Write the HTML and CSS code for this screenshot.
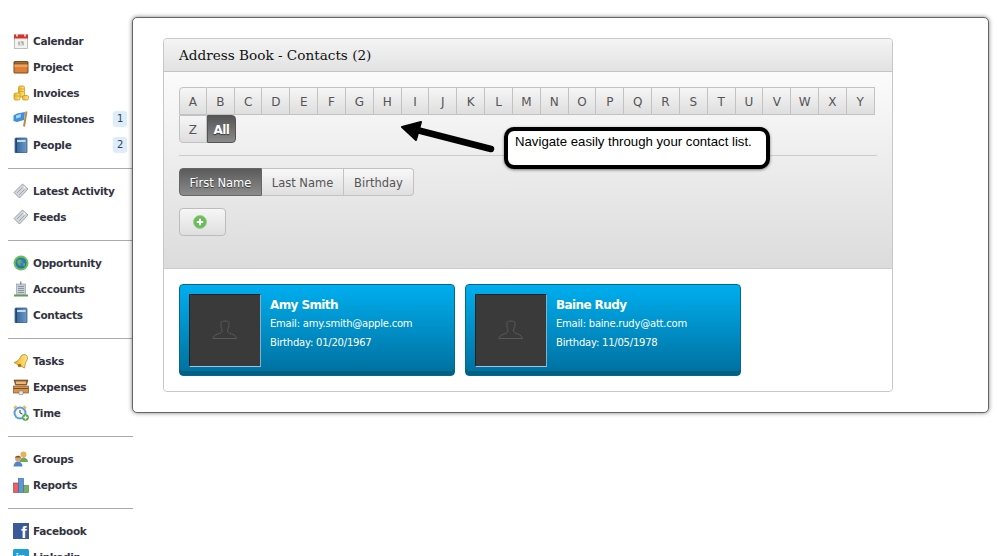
FILE: index.html
```html
<!DOCTYPE html>
<html>
    <head>
        <meta charset="utf-8">
        <title>Address Book - Contacts</title>
        <link rel="stylesheet" href="styles.css">
    </head>
    <body>
        <svg class="sprite" xmlns="http://www.w3.org/2000/svg">
            <defs>
                <linearGradient id="bookfill" x1="0" x2="1" y1="0" y2="0"><stop offset="0" stop-color="#2f5f96"/><stop offset="1" stop-color="#6d9cc9"/></linearGradient>
                <linearGradient id="goldfill" x1="0" x2="1" y1="0" y2="0"><stop offset="0" stop-color="#f0b720"/><stop offset="1" stop-color="#ffe488"/></linearGradient>
                <radialGradient id="globefill" cx=".45" cy=".45" r=".6"><stop offset="0" stop-color="#3f8fd0"/><stop offset="1" stop-color="#1d6ea0"/></radialGradient>
            </defs>
            <symbol id="book" viewBox="0 0 16 16">
                <rect x="2" y="1" width="12" height="15" rx="1" fill="url(#bookfill)" stroke="#2a4d78" stroke-width=".7"/>
                <rect x="4" y="3" width="8.5" height="2" fill="#c4daee"/>
                <path d="M3.5 1.5v14" stroke="#24466f" stroke-width="1"/>
            </symbol>
            <symbol id="ticket" viewBox="0 0 16 16">
                <path d="M1 9.500 9.500 1l5.500 5L6.500 15z" fill="#d4d6d8" stroke="#8d9194" stroke-width=".8"/>
                <path d="M4 10l5.500-5.500M6 12l5.500-5.500" stroke="#8fa7c0" stroke-width="1"/>
                <path d="M11 4l1 1" stroke="#fff" stroke-width="1.400"/>
            </symbol>
            <symbol id="person" viewBox="0 0 26 22">
                <path d="M9 2.500C9 .5 17 .5 17 2.500c.5 4-1 6-1.500 7.500-.3 2 1 3 4 4 3 1 4.500 2 5 4.500H1C1.500 16 3 15 6 14c3-1 4.300-2 4-4C9.500 8.500 8.500 6.500 9 2.500z" fill="none" stroke="#595959" stroke-width="1"/>
            </symbol>
        </svg>

        <div class="layout">
            <nav class="sidebar">
                <ul class="navgroup">
                    <li>
                        <svg class="ico" viewBox="0 0 16 16"><rect x="1.500" y="2" width="13" height="13.500" fill="#f3f3f0" stroke="#a5a5a0" stroke-width=".7"/><rect x="1" y="1.500" width="14" height="4" fill="#d8332a"/><path d="M4 .5v3M12 .5v3" stroke="#eee" stroke-width="1.600"/><path d="M5 8h6v5H5z" fill="#ddd"/><path d="M6 9v3M8 9h2v3" stroke="#888" stroke-width=".8" fill="none"/></svg>
                        <span>Calendar</span>
                    </li>
                    <li>
                        <svg class="ico" viewBox="0 0 16 16"><rect x=".5" y="2" width="15" height="12.500" rx="1.500" fill="#7a4a20"/><rect x="1.500" y="5.500" width="13" height="8" fill="#dd7f35"/><rect x="1.500" y="5.500" width="13" height="2.500" fill="#eea261"/><rect x="2" y="3" width="12" height="1.600" fill="#a26a35"/></svg>
                        <span>Project</span>
                    </li>
                    <li>
                        <svg class="ico" viewBox="0 0 16 16"><rect x="5.500" y="1" width="6" height="11" rx="1.500" fill="url(#goldfill)" stroke="#c48e12" stroke-width=".7"/><rect x="1" y="8" width="6" height="7" rx="1.500" fill="url(#goldfill)" stroke="#c48e12" stroke-width=".7"/><rect x="9.500" y="10.500" width="6" height="4.500" rx="1.500" fill="url(#goldfill)" stroke="#c48e12" stroke-width=".7"/><path d="M6 4h5M6 6.500h5M1.500 11h5" stroke="#c48e12" stroke-width=".6"/></svg>
                        <span>Invoices</span>
                    </li>
                    <li>
                        <svg class="ico" viewBox="0 0 16 16"><path d="M.5 4.500 4 2.500 12 1l-1 8-7 2-3.500-1z" fill="#3f8fe0"/><path d="M3 4.500l5-1.500L7.500 6.500 3 7.500z" fill="#a8d4f7"/><path d="M13.500 .5 11 15.500" stroke="#b98a4a" stroke-width="2"/></svg>
                        <span>Milestones</span>
                        <em class="badge">1</em>
                    </li>
                    <li>
                        <svg class="ico"><use href="#book"/></svg>
                        <span>People</span>
                        <em class="badge">2</em>
                    </li>
                </ul>
                <ul class="navgroup">
                    <li>
                        <svg class="ico"><use href="#ticket"/></svg>
                        <span>Latest Activity</span>
                    </li>
                    <li>
                        <svg class="ico"><use href="#ticket"/></svg>
                        <span>Feeds</span>
                    </li>
                </ul>
                <ul class="navgroup">
                    <li>
                        <svg class="ico" viewBox="0 0 16 16"><circle cx="8" cy="8" r="7.500" fill="#6fbf5c"/><circle cx="8" cy="8" r="5.500" fill="url(#globefill)"/><path d="M5 4.500l3 .5 1 2-2 1 .5 3-2-1.500L4 7z" fill="#6fae58"/><path d="M10.500 8l2 .5-1 3-1.500-1z" fill="#6fae58"/></svg>
                        <span>Opportunity</span>
                    </li>
                    <li>
                        <svg class="ico" viewBox="0 0 16 16"><rect x="1" y="13.500" width="14" height="2" fill="#5da04a"/><rect x="3.500" y="3" width="9" height="10.500" fill="#c7ced6" stroke="#8a929a" stroke-width=".6"/><rect x="7" y=".5" width="1.500" height="3" fill="#8a929a"/><path d="M5 5.500h6M5 7.500h6M5 9.500h6M5 11.500h6" stroke="#8a96a3" stroke-width="1"/></svg>
                        <span>Accounts</span>
                    </li>
                    <li>
                        <svg class="ico"><use href="#book"/></svg>
                        <span>Contacts</span>
                    </li>
                </ul>
                <ul class="navgroup">
                    <li>
                        <svg class="ico" viewBox="0 0 16 16"><path d="M1 9.500C4 9 6 7 7.500 4c1-2.500 4-3 5.500-2 2 1.500 2 4 .5 6-1.500 2-1.500 5-2 7z" fill="url(#goldfill)" stroke="#b07d12" stroke-width=".7"/><circle cx="6.500" cy="12.500" r="1.800" fill="#a8741a"/></svg>
                        <span>Tasks</span>
                    </li>
                    <li>
                        <svg class="ico" viewBox="0 0 16 16"><path d="M1 1h14l-1.500 5h-11z" fill="#9c6430" stroke="#5e3a18" stroke-width=".6"/><rect x="3" y="2.500" width="10" height="2.500" fill="#e8b878"/><rect x=".5" y="7" width="15" height="7" fill="#d8924a" stroke="#6e4520" stroke-width=".6"/><path d="M.5 9.500h15" stroke="#7a4e24" stroke-width="1"/><rect x="6" y="12" width="4" height="3.500" fill="#e8e8e8" stroke="#777" stroke-width=".5"/></svg>
                        <span>Expenses</span>
                    </li>
                    <li>
                        <svg class="ico" viewBox="0 0 16 16"><circle cx="7" cy="8" r="6.500" fill="#5a9ddb"/><circle cx="7" cy="8" r="4.500" fill="#f1f5f8"/><path d="M7 5v3l2.500 1" stroke="#445" stroke-width="1" fill="none"/><path d="M1 3.500 3.500 1M13 3.500 10.500 1" stroke="#e8b840" stroke-width="2"/><circle cx="12.500" cy="12.500" r="3.300" fill="#47a53c"/><path d="M12.500 10.500v4M10.500 12.500h4" stroke="#fff" stroke-width="1.300"/></svg>
                        <span>Time</span>
                    </li>
                </ul>
                <ul class="navgroup">
                    <li>
                        <svg class="ico" viewBox="0 0 16 16"><circle cx="10.500" cy="3.500" r="3" fill="#e9b05c"/><path d="M6.500 11c0-3 2-4.500 4-4.500s4.500 1.500 4.500 4.500z" fill="#6fa956"/><circle cx="5" cy="7.500" r="3" fill="#d9a273"/><path d="M2 6.500c1-2 5-2 6 0z" fill="#7a4a26"/><path d="M.5 15.500c0-3 2-5 4.500-5s4.500 2 4.500 5z" fill="#4f86c9"/></svg>
                        <span>Groups</span>
                    </li>
                    <li>
                        <svg class="ico" viewBox="0 0 16 16"><rect x=".5" y="6" width="5" height="9.500" fill="#e86060" stroke="#b52f2f" stroke-width=".6"/><rect x="5.500" y="1.500" width="5" height="14" fill="#5e95d8" stroke="#2f62a5" stroke-width=".6"/><rect x="10.500" y="8.500" width="5" height="7" fill="#74b06a" stroke="#3e7d36" stroke-width=".6"/></svg>
                        <span>Reports</span>
                    </li>
                </ul>
                <ul class="navgroup">
                    <li>
                        <svg class="ico" viewBox="0 0 16 16"><rect width="16" height="16" fill="#3b5998"/><text x="8" y="15" class="brand">f</text></svg>
                        <span>Facebook</span>
                    </li>
                    <li>
                        <svg class="ico" viewBox="0 0 16 16"><rect width="16" height="16" rx="1.500" fill="#1f9fd6"/><text x="2.500" y="13" class="brand small">in</text></svg>
                        <span>Linkedin</span>
                    </li>
                </ul>
            </nav>

            <div class="main">
                <div class="panel">
                    <h1 class="panelhead">Address Book - Contacts (2)</h1>
                    <div class="filters">
                        <div class="alpha">
                            <a>A</a><a>B</a><a>C</a><a>D</a><a>E</a><a>F</a><a>G</a><a>H</a><a>I</a><a>J</a><a>K</a><a>L</a><a>M</a><a>N</a><a>O</a><a>P</a><a>Q</a><a>R</a><a>S</a><a>T</a><a>U</a><a>V</a><a>W</a><a>X</a><a>Y</a><a>Z</a><a class="on">All</a>
                        </div>
                        <div class="rule"></div>
                        <div class="tabs">
                            <a class="on">First Name</a><a>Last Name</a><a>Birthday</a>
                        </div>
                        <a class="addbtn">
                            <svg viewBox="0 0 14 14" width="14" height="14"><circle cx="7" cy="7" r="6.500" fill="#6cbb5a" stroke="#9ad08c" stroke-width="1"/><path d="M7 3.800v6.400M3.800 7h6.400" stroke="#fff" stroke-width="2"/></svg>
                        </a>
                    </div>
                    <div class="cards">
                        <div class="card">
                            <div class="photo">
                                <svg width="26" height="22"><use href="#person"/></svg>
                            </div>
                            <div class="info">
                                <h2>Amy Smith</h2>
                                <p>Email: amy.smith@apple.com</p>
                                <p>Birthday: 01/20/1967</p>
                            </div>
                        </div>
                        <div class="card">
                            <div class="photo">
                                <svg width="26" height="22"><use href="#person"/></svg>
                            </div>
                            <div class="info">
                                <h2>Baine Rudy</h2>
                                <p>Email: baine.rudy@att.com</p>
                                <p>Birthday: 11/05/1978</p>
                            </div>
                        </div>
                    </div>
                </div>
            </div>
        </div>

        <svg class="arrow" viewBox="0 0 100 36" width="100" height="36">
            <path d="M92 28 14 8" stroke="#000" stroke-width="6.500" stroke-linecap="round" fill="none"/>
            <path d="M3 6 22 1 17 19z" fill="#000" stroke="#000" stroke-width="2" stroke-linejoin="round"/>
        </svg>
        <div class="callout">Navigate easily through your contact list.</div>
    </body>
</html>
```

FILE: styles.css
```css
html, body{
    margin: 0;
    height: 556px;
    overflow: hidden;
    background: #fff;
}
body{
    position: relative;
    font-family: "DejaVu Sans", sans-serif;
}
.sprite{
    position: absolute;
    width: 0;
    height: 0;
}
.layout{
    display: flex;
    align-items: flex-start;
}

/* left menu */
.sidebar{
    width: 125px;
    flex: none;
    padding: 19px 0 0 8px;
}
.navgroup{
    list-style: none;
    margin: 0;
    padding: 9px 0 10px;
    border-bottom: 1px solid #aaa;
}
.navgroup:last-child{
    border-bottom: 0;
}
.navgroup li{
    display: flex;
    align-items: center;
    height: 26px;
    padding-left: 5px;
    font-size: 10.5px;
    font-weight: bold;
    letter-spacing: -.3px;
    color: #33333f;
}
.ico{
    width: 16px;
    height: 16px;
    flex: none;
    margin-right: 4px;
    overflow: visible;
}
.badge{
    margin-left: auto;
    margin-right: 6px;
    width: 14px;
    height: 16px;
    line-height: 16px;
    border-radius: 3px;
    background: #deedfb;
    color: #345;
    font-size: 10px;
    font-style: normal;
    font-weight: normal;
    text-align: center;
}
.brand{
    font-family: "Liberation Sans", sans-serif;
    font-weight: bold;
    font-size: 17px;
    fill: #fff;
}
.brand.small{
    font-size: 12px;
}

/* main box */
.main{
    box-sizing: border-box;
    width: 857px;
    height: 396px;
    margin: 17px 0 0 -1px;
    padding: 20px 30px;
    position: relative;
    background: #fff;
    border: 1px solid #666;
    border-radius: 5px;
    box-shadow: 0 0 4px rgba(0,0,0,.5);
}
.panel{
    width: 730px;
    box-sizing: border-box;
    border: 1px solid #c8c8c8;
    border-radius: 4px;
}
.panelhead{
    margin: 0;
    height: 32px;
    line-height: 32px;
    padding-left: 15px;
    font-family: "DejaVu Serif", serif;
    font-size: 13.6px;
    font-weight: normal;
    color: #111;
    background: linear-gradient(#f4f4f4, #e2e2e2);
    border-bottom: 1px solid #c4c4c4;
    border-radius: 4px 4px 0 0;
}
.filters{
    height: 197px;
    box-sizing: border-box;
    padding: 15px 15px 0;
    background: linear-gradient(#fbfbfb, #dcdcdc);
    border-bottom: 1px solid #ccc;
}
.alpha{
    display: flex;
    flex-wrap: wrap;
    width: 700px;
}
.alpha a{
    box-sizing: border-box;
    width: 27.84px;
    height: 28px;
    line-height: 28px;
    text-align: center;
    font-size: 12px;
    color: #555;
    background: linear-gradient(#f6f6f6, #dedede);
    border: 1px solid #c2c2c2;
    border-left-width: 0;
}
.alpha a:first-child{
    border-left-width: 1px;
    border-top-left-radius: 4px;
}
.alpha a:nth-child(26){
    border-left-width: 1px;
    border-bottom-left-radius: 4px;
}
.alpha a.on{
    width: 29px;
    color: #fff;
    font-weight: bold;
    letter-spacing: -.6px;
    background: linear-gradient(#555, #8a8a8a);
    border: 1px solid #555;
    border-radius: 0 4px 4px 0;
    text-shadow: 0 1px 1px #333;
}
.rule{
    width: 698px;
    height: 1px;
    margin: 12px 0;
    background: #ccc;
}
.tabs{
    display: flex;
    height: 28px;
}
.tabs a{
    box-sizing: border-box;
    flex: none;
    width: 70px;
    height: 28px;
    line-height: 28px;
    text-align: center;
    white-space: nowrap;
    font-size: 11.5px;
    color: #555;
    background: linear-gradient(#f8f8f8, #dfdfdf);
    border: 1px solid #c2c2c2;
    border-left-width: 0;
}
.tabs a:nth-child(2){
    width: 82px;
}
.tabs a:last-child{
    border-radius: 0 4px 4px 0;
}
.tabs a.on{
    width: 83px;
    color: #fff;
    background: linear-gradient(#5a5a5a, #8c8c8c);
    border: 1px solid #666;
    border-radius: 4px 0 0 4px;
    text-shadow: 0 1px 1px #333;
}
.addbtn{
    display: flex;
    align-items: center;
    justify-content: center;
    box-sizing: border-box;
    width: 47px;
    height: 28px;
    margin-top: 12px;
    background: linear-gradient(#f6f6f6, #dfdfdf);
    border: 1px solid #bdbdbd;
    border-radius: 4px;
}
.addbtn svg{
    margin-right: 6px;
}
.cards{
    display: flex;
    gap: 10px;
    padding: 15px;
    background: #fff;
    border-radius: 0 0 4px 4px;
}
.card{
    display: flex;
    box-sizing: border-box;
    width: 276px;
    height: 92px;
    padding: 9px;
    border: 1px solid #04688f;
    border-radius: 4px;
    background: linear-gradient(#00aeef, #006f9e);
    box-shadow: inset 0 -4px 0 #00607f;
}
.photo{
    display: flex;
    align-items: center;
    justify-content: center;
    box-sizing: border-box;
    width: 72px;
    height: 73px;
    flex: none;
    background: #3a3a3a;
    border: 1px solid #222;
    border-bottom: 1px solid #9cc7de;
    border-right-color: #7fb2cc;
}
.info{
    padding: 1px 0 0 9px;
    color: #fff;
}
.info h2{
    margin: 0 0 -1px;
    font-size: 12px;
    letter-spacing: -.6px;
    line-height: 20px;
}
.info p{
    margin: 0;
    font-size: 10px;
    letter-spacing: -.22px;
    line-height: 19px;
}

/* annotation drawn on top of the screenshot */
.arrow{
    position: absolute;
    left: 399px;
    top: 121px;
}
.callout{
    position: absolute;
    left: 504px;
    top: 127px;
    box-sizing: border-box;
    width: 266px;
    height: 42px;
    padding: 3px 0 0 7px;
    background: #fff;
    border: 4px solid #000;
    border-radius: 10px;
    box-shadow: 0 1px 3px rgba(0,0,0,.5);
    font-family: "Liberation Sans", sans-serif;
    font-size: 13.2px;
    color: #000;
}
```
